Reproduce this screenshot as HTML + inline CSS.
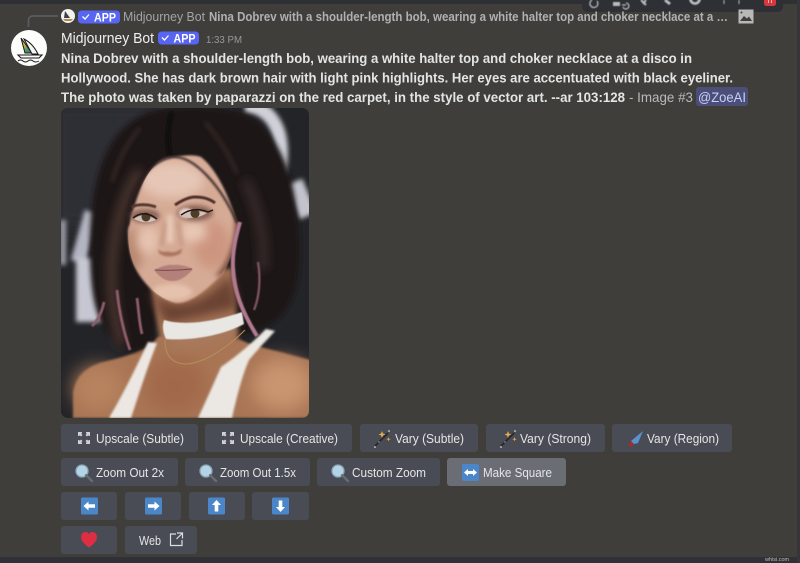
<!DOCTYPE html>
<html><head><meta charset="utf-8"><style>
html,body{margin:0;padding:0;width:800px;height:563px;overflow:hidden;background:#3f3e3a}
svg{display:block;font-family:"Liberation Sans",sans-serif}
.b{fill:#e4e5e6;font-size:12.5px}
.m{fill:#e3e4e4;font-weight:bold;font-size:14px}
.btn{fill:#494c54}
</style></head><body>
<svg width="800" height="563" viewBox="0 0 800 563" xmlns="http://www.w3.org/2000/svg">
<defs>
<filter id="s" filterUnits="userSpaceOnUse" x="0" y="0" width="800" height="563"><feGaussianBlur stdDeviation="0.3"/></filter>
<filter id="b05" filterUnits="userSpaceOnUse" x="0" y="0" width="800" height="563"><feGaussianBlur stdDeviation="0.6"/></filter>
<filter id="b1" filterUnits="userSpaceOnUse" x="0" y="0" width="800" height="563"><feGaussianBlur stdDeviation="1"/></filter>
<filter id="b2" filterUnits="userSpaceOnUse" x="0" y="0" width="800" height="563"><feGaussianBlur stdDeviation="2.500"/></filter>
<filter id="b4" filterUnits="userSpaceOnUse" x="0" y="0" width="800" height="563"><feGaussianBlur stdDeviation="5"/></filter>
<filter id="b8" filterUnits="userSpaceOnUse" x="0" y="0" width="800" height="563"><feGaussianBlur stdDeviation="9"/></filter>
<clipPath id="ic"><rect x="61" y="108" width="248" height="310" rx="7"/></clipPath>
<clipPath id="fc"><path d="M172 157c-18 1-32 22-44 73 0 20 4 34 12 46 8 12 22 24 36 27 12 1 28-10 44-27 8-9 14-28 17-53-6-20-18-52-36-66-8-3-19-1-29 0z"/></clipPath>
<linearGradient id="rb" x1="0" y1="0" x2="1" y2="1"><stop offset="0" stop-color="#e23d3d"/><stop offset=".35" stop-color="#e8b93a"/><stop offset=".65" stop-color="#3da35a"/><stop offset="1" stop-color="#6a48b8"/></linearGradient>
<g id="mag"><circle cx="7" cy="7" r="6" fill="#b5d3e6" stroke="#8ba6b6" stroke-width="1.300"/><path d="M11.200 11.200L17 17" stroke="#676d75" stroke-width="2.400" stroke-linecap="round"/></g>
<g id="wand"><path d="M1 16L14 3" stroke="#26282b" stroke-width="1.800"/><path d="M8 1l1 2.500 2.500 1-2.500 1-1 2.500-1-2.500-2.500-1 2.500-1zM14.500 7l.6 1.600 1.600.6-1.600.6-.6 1.600-.6-1.600-1.600-.6 1.600-.6z" fill="#e3a94a"/><circle cx="1" cy="17" r=".8" fill="#fff"/><circle cx="15" cy="1" r=".8" fill="#fff"/><circle cx="5" cy="12" r=".6" fill="#ddd"/></g>
<g id="ups" fill="#cfd0d3"><path d="M0 0h4v1.500H3L4.500 3 3 4.500 1.500 3v1H0zM8 0h4v4h-1.500V3L9 4.500 7.500 3 9 1.500H8zM0 8h1.500v1L3 7.500 4.500 9 3 10.500h1V12H0zM10.500 8H12v4H8v-1.500h1L7.500 9 9 7.500l1.500 1.500z"/></g>
</defs>

<rect width="800" height="563" fill="#3f3e3a"/>
<rect x="0" y="0" width="800" height="4" fill="#2f3034"/>
<rect x="0" y="557" width="800" height="6" fill="#303136"/>
<rect x="797" y="0" width="3" height="563" fill="#36363a"/>
<text x="765" y="561" font-size="5.500" fill="#bbb" filter="url(#s)">whisi.com</text>

<!-- toolbar -->
<rect x="582" y="-8" width="201" height="20" rx="5" fill="#2f3035"/>
<g fill="none" stroke="#b9babd" stroke-width="1.300" filter="url(#b05)">
<path d="M597 1a4 4 0 1 1-5-1"/>
<path d="M613 6h7v-4h-7z" fill="#b9babd" stroke="none"/>
<path d="M622 5h4M626 3a3 3 0 1 1-3 4"/>
<path d="M641 0l5 5M646 0l-3 4" stroke-width="2"/>
<path d="M665 0l5 4" stroke-width="3"/>
<circle cx="695" cy="-1" r="4.500" stroke-width="2.800"/>
<path d="M724 0v4M739 0v4" stroke-width="1"/>
</g>
<rect x="764" y="-4" width="12" height="10" rx="2.500" fill="#da373c"/>
<path d="M768.500 0v3M771.500 0v3" stroke="#e8b0b0" stroke-width="1"/>

<!-- reply line -->
<path d="M28.500 27V20a4 4 0 0 1 4-4H58" fill="none" stroke="#5b5c60" stroke-width="1.700"/>
<circle cx="68" cy="16" r="7" fill="#f2f2f0"/>
<path d="M65 11l5 7h-6z" fill="#3d4045"/><path d="M63 19h10l-2 2h-6z" fill="#b48b4e"/>
<rect x="78" y="10.500" width="42" height="13" rx="3.500" fill="#5865f2"/>
<path d="M82.500 16.500l2.500 2.500 4-4.500" fill="none" stroke="#fff" stroke-width="1.300"/>
<text x="94" y="21.500" font-size="11.500" font-weight="bold" fill="#fff" textLength="22" lengthAdjust="spacingAndGlyphs" filter="url(#s)">APP</text>
<text x="123" y="21" font-size="12.500" fill="#a3a4a6" textLength="82" lengthAdjust="spacingAndGlyphs" filter="url(#s)">Midjourney Bot</text>
<text x="209" y="21" font-size="12.500" font-weight="bold" fill="#b0b1b2" textLength="519" lengthAdjust="spacingAndGlyphs" filter="url(#s)">Nina Dobrev with a shoulder-length bob, wearing a white halter top and choker necklace at a …</text>
<path d="M738.500 9.500h15v14h-15z" fill="#b8b8b8"/><path d="M740 21l4-5 3 2.500 2-2 3 4.500z" fill="#3f3e3a"/><circle cx="741.500" cy="12.500" r="1" fill="#3f3e3a"/>

<!-- avatar -->
<circle cx="29" cy="48" r="18" fill="#fdfdfb"/>
<path d="M21 38l11 15H25z" fill="url(#rb)" stroke="#16181a" stroke-width="1"/>
<path d="M24 39c6 3 11 9 14 15h-6z" fill="#f5f5f2" stroke="#16181a" stroke-width="1"/>
<path d="M18 55h24l-3 3H21z" fill="#fdfdfb" stroke="#16181a" stroke-width="1.100"/>
<path d="M18 61q2.500-2 5 0t5 0 5 0 6 0" fill="none" stroke="#16181a" stroke-width="1"/>

<!-- header -->
<g filter="url(#s)">
<text x="61" y="43" font-size="14.500" fill="#efefef" textLength="93" lengthAdjust="spacingAndGlyphs">Midjourney Bot</text>
<rect x="158" y="31.500" width="41" height="13" rx="3.500" fill="#5865f2"/>
<path d="M162 37.500l2.500 2.500 4-4.500" fill="none" stroke="#fff" stroke-width="1.300"/>
<text x="173.500" y="42.500" font-size="11.500" font-weight="bold" fill="#fff" textLength="22" lengthAdjust="spacingAndGlyphs">APP</text>
<text x="206" y="43" font-size="10.500" fill="#96979a" textLength="36" lengthAdjust="spacingAndGlyphs">1:33 PM</text>
<text class="m" x="61" y="63" textLength="631" lengthAdjust="spacingAndGlyphs">Nina Dobrev with a shoulder-length bob, wearing a white halter top and choker necklace at a disco in</text>
<text class="m" x="61" y="82.500" textLength="672" lengthAdjust="spacingAndGlyphs">Hollywood. She has dark brown hair with light pink highlights. Her eyes are accentuated with black eyeliner.</text>
<text class="m" x="61" y="102" textLength="564" lengthAdjust="spacingAndGlyphs">The photo was taken by paparazzi on the red carpet, in the style of vector art. --ar 103:128</text>
<text x="629" y="102" font-size="14" fill="#b9babb" textLength="64" lengthAdjust="spacingAndGlyphs">- Image #3</text>
<rect x="696" y="87" width="52" height="19" rx="3" fill="#4b4f78"/>
<text x="698" y="102" font-size="14" fill="#c9cdfb" textLength="48" lengthAdjust="spacingAndGlyphs">@ZoeAI</text>
</g>

<!-- portrait -->
<g clip-path="url(#ic)">
<rect x="61" y="108" width="248" height="310" fill="#232428"/>
<rect x="50" y="100" width="130" height="130" fill="#2e2f35" filter="url(#b8)"/>
<g filter="url(#b2)" fill="none" stroke="#cfd0d8">
<path d="M245 106c22 0 36 18 36 46 0 10-1 16-3 22" stroke-width="14"/>
<path d="M294 182l14 34" stroke-width="18" stroke="#c2c3cc"/>
<path d="M92 212L78 262" stroke-width="15" stroke="#b4b5c2"/>
<path d="M90 258V322" stroke-width="28" stroke="#c6c7d2"/>
<path d="M63 220v45" stroke-width="6" stroke="#a0a1ad"/>
</g>
<!-- body -->
<path d="M73 418v-25c2-15 12-26 30-31 25-6 40-10 55-25l70-8c12 16 35 18 60 25 20 6 61 14 61 20v44z" fill="#a87555" filter="url(#b1)"/>
<ellipse cx="282" cy="385" rx="30" ry="26" fill="#c9946f" filter="url(#b8)"/>
<ellipse cx="98" cy="388" rx="24" ry="22" fill="#b8835f" filter="url(#b8)"/>
<ellipse cx="175" cy="385" rx="30" ry="28" fill="#a2694a" filter="url(#b8)"/>
<!-- hair mass -->
<path d="M176 108c-32 0-58 16-72 50-10 24-14 54-14 88 0 30 2 56 10 74 6 14 18 26 32 32l20-6 10-50 70-5 5 48 12-6c24-6 38-18 46-42 6-24 6-50 2-76-4-44-20-82-48-100-20-6-50-9-73-7z" fill="#1f1918" filter="url(#b2)"/>
<path d="M140 170c-14 20-24 50-28 90-2 30 2 60 10 85" fill="none" stroke="#4a342e" stroke-width="10" filter="url(#b4)"/>
<path d="M245 180c14 28 20 60 18 90" fill="none" stroke="#3a2c29" stroke-width="9" filter="url(#b4)"/>
<path d="M172 112c-4 14-5 30-2 44" fill="none" stroke="#0d0a0a" stroke-width="4" filter="url(#b1)"/>
<path d="M205 122c10 12 24 30 32 52M140 128c-12 14-22 32-28 54" fill="none" stroke="#3a2b28" stroke-width="3" filter="url(#b2)"/>
<!-- neck -->
<path d="M150 280l10 60-10 12 88-14-6-70z" fill="#a67356" filter="url(#b2)"/>
<path d="M148 288c14 22 52 24 82-14l8 34-72 16z" fill="#6a4333" filter="url(#b4)"/>
<path d="M170 345c20 6 50-2 68-14l-6-4-62 8z" fill="#a97a5d" filter="url(#b4)"/>
<!-- halter -->
<path d="M157 343l-9-1c-12 26-26 54-39 76h22c8-24 16-50 26-75z" fill="#ece7e2" filter="url(#b1)"/>
<path d="M275 331l-9-2c-15 15-30 28-45 38-8 18-16 36-23 51h34c5-22 10-42 17-58 8-10 18-20 26-29z" fill="#ebe7e2" filter="url(#b1)"/>
<!-- necklace -->
<path d="M165 340c0 12 4 24 22 24 20-2 42-18 58-34" fill="none" stroke="#b08d5c" stroke-width="1.100" filter="url(#s)"/>
<!-- choker -->
<path d="M164 320c20 6 50 2 78-8l2 12c-22 12-55 17-78 15-3-6-4-13-2-19z" fill="#e9e7e3" filter="url(#b05)"/>
<!-- face -->
<g filter="url(#b1)">
<path d="M172 157c-18 1-32 22-44 73 0 20 4 34 12 46 8 12 22 24 36 27 12 1 28-10 44-27 8-9 14-28 17-53-6-20-18-52-36-66-8-3-19-1-29 0z" fill="#d6ab96"/>
</g>
<g clip-path="url(#fc)">
<ellipse cx="172" cy="180" rx="32" ry="18" fill="#e6c6b6" filter="url(#b4)"/>
<ellipse cx="172" cy="292" rx="20" ry="8" fill="#e6c2ad" filter="url(#b2)"/>
<ellipse cx="212" cy="245" rx="18" ry="24" fill="#cd957f" filter="url(#b4)"/>
<ellipse cx="133" cy="250" rx="10" ry="22" fill="#b98770" filter="url(#b4)"/>
<path d="M232 195c6 30 2 60-18 82l24-6 8-60z" fill="#8a5a48" filter="url(#b2)"/>
<ellipse cx="148" cy="240" rx="11" ry="14" fill="#e6c3b0" filter="url(#b4)"/>
<ellipse cx="193" cy="232" rx="14" ry="10" fill="#e8c8b6" filter="url(#b4)"/>
</g>
<!-- nose -->
<path d="M166 222c-2 10-3 16-5 24M178 222c2 10 2 16 4 24" fill="none" stroke="#bd8f78" stroke-width="3" filter="url(#b2)"/>
<path d="M170 215v28" stroke="#ecd0c0" stroke-width="5" filter="url(#b2)"/>
<path d="M158 248c3 6 7 3 12 4s9-1 12-4l-1 5c-5 4-17 5-22 0z" fill="#a9725c" filter="url(#b1)"/>
<!-- brows -->
<path d="M131 207c7-3 17-3 25 0" fill="none" stroke="#54382e" stroke-width="3" filter="url(#b05)"/>
<path d="M175 205c6-4 14-8 20-8 8 0 15 2 20 6" fill="none" stroke="#50332a" stroke-width="3" filter="url(#b05)"/>
<!-- eyes -->
<ellipse cx="145" cy="216" rx="15" ry="7" fill="#8c6558" filter="url(#b2)"/>
<ellipse cx="195" cy="213" rx="18" ry="8" fill="#8c6355" filter="url(#b2)"/>
<ellipse cx="186" cy="213" rx="7" ry="5" fill="#e6cfc7" filter="url(#b1)"/>
<path d="M134 219q10-8 22 1q-10 5-22-1z" fill="#d0c1ba" filter="url(#s)"/>
<path d="M181 216q12-8 26-3q-12 8-26 3z" fill="#d0c1ba" filter="url(#s)"/>
<circle cx="146" cy="217" r="4.500" fill="#4e3c27" filter="url(#s)"/>
<circle cx="195" cy="213.500" r="4.500" fill="#4e3c27" filter="url(#s)"/>
<path d="M133 218q11-9 24 1M181 215q13-9 27-3l5-2" fill="none" stroke="#1f1512" stroke-width="1.400" filter="url(#s)"/>
<!-- lips -->
<path d="M154 270c7-3 13-6 19-5 6-1 14 1 20 4-7 8-13 12-21 12-8 0-13-5-18-11z" fill="#b3807a" filter="url(#b05)"/>
<path d="M155 270q18 1 37-1" fill="none" stroke="#7d4a47" stroke-width="1" filter="url(#s)"/>
<!-- hairline edge strands -->
<path d="M128 225c-2-25 14-62 44-68 22-2 50 30 65 66" fill="none" stroke="#2a1f1c" stroke-width="2" filter="url(#b1)"/>
<!-- pink highlights -->
<path d="M117 290c2 22 6 40 13 60M104 302c-2 10-6 18-12 24M137 298c2 14 2 24 5 36" fill="none" stroke="#8f5d6c" stroke-width="2.800" filter="url(#b05)"/>
<path d="M240 222c-4 14-8 30-7 46 1 22 8 42 24 68" fill="none" stroke="#b27a90" stroke-width="4" filter="url(#b05)"/>
<path d="M258 262c3 18 1 36-4 48" fill="none" stroke="#7e5560" stroke-width="2.300" filter="url(#b05)"/>
</g>

<!-- buttons -->
<g class="btn">
<rect x="61" y="424" width="137" height="28" rx="3"/><rect x="205" y="424" width="147" height="28" rx="3"/><rect x="360" y="424" width="118" height="28" rx="3"/><rect x="486" y="424" width="119" height="28" rx="3"/><rect x="612" y="424" width="120" height="28" rx="3"/>
<rect x="61" y="458" width="117" height="28" rx="3"/><rect x="185" y="458" width="125" height="28" rx="3"/><rect x="317" y="458" width="123" height="28" rx="3"/>
<rect x="447" y="458" width="119" height="28" rx="3" fill="#6b6d75"/>
<rect x="61" y="492" width="56" height="28" rx="3"/><rect x="125" y="492" width="56" height="28" rx="3"/><rect x="189" y="492" width="56" height="28" rx="3"/><rect x="252" y="492" width="57" height="28" rx="3"/>
<rect x="61" y="526" width="56" height="28" rx="3"/><rect x="125" y="526" width="72" height="28" rx="3"/>
</g>

<g filter="url(#s)">
<text class="b" x="96" y="443" textLength="88" lengthAdjust="spacingAndGlyphs">Upscale (Subtle)</text>
<text class="b" x="240" y="443" textLength="98" lengthAdjust="spacingAndGlyphs">Upscale (Creative)</text>
<text class="b" x="395" y="443" textLength="69" lengthAdjust="spacingAndGlyphs">Vary (Subtle)</text>
<text class="b" x="520" y="443" textLength="71" lengthAdjust="spacingAndGlyphs">Vary (Strong)</text>
<text class="b" x="647" y="443" textLength="72" lengthAdjust="spacingAndGlyphs">Vary (Region)</text>
<text class="b" x="96" y="477" textLength="68" lengthAdjust="spacingAndGlyphs">Zoom Out 2x</text>
<text class="b" x="220" y="477" textLength="76" lengthAdjust="spacingAndGlyphs">Zoom Out 1.5x</text>
<text class="b" x="352" y="477" textLength="74" lengthAdjust="spacingAndGlyphs">Custom Zoom</text>
<text class="b" x="483" y="477" textLength="69" lengthAdjust="spacingAndGlyphs">Make Square</text>
<text class="b" x="139" y="545" textLength="22" lengthAdjust="spacingAndGlyphs">Web</text>
</g>

<use href="#ups" x="78" y="432"/>
<use href="#ups" x="222" y="432"/>
<use href="#wand" x="374" y="430"/>
<use href="#wand" x="500" y="430"/>
<!-- brush -->
<path d="M628 445l3-4 3 3-4 3z" fill="#a8282e"/><path d="M631 441L643 431l-5 12-4 1z" fill="#5a93cb"/>
<use href="#mag" x="75" y="464"/>
<use href="#mag" x="199" y="464"/>
<use href="#mag" x="331" y="464"/>
<!-- make square -->
<rect x="462" y="464" width="17" height="17" rx="1.500" fill="#4a86c8"/>
<path d="M464 472.500l4-3.500v2h5v-2l4 3.500-4 3.500v-2h-5v2z" fill="#fff"/>
<!-- arrows -->
<rect x="81" y="497.500" width="17" height="17" rx="1.500" fill="#4a86c8"/><path d="M83.500 506l5-4.500v2.700h6.500v3.600h-6.500v2.700z" fill="#fff"/>
<rect x="145" y="497.500" width="17" height="17" rx="1.500" fill="#4a86c8"/><path d="M159.500 506l-5-4.500v2.700H148v3.600h6.500v2.700z" fill="#fff"/>
<rect x="208" y="497.500" width="17" height="17" rx="1.500" fill="#4a86c8"/><path d="M216.500 500l4.500 5h-2.700v6.500h-3.600V505H212z" fill="#fff"/>
<rect x="272" y="497.500" width="17" height="17" rx="1.500" fill="#4a86c8"/><path d="M280.500 512l4.500-5h-2.700v-6.500h-3.600v6.500H276z" fill="#fff"/>
<!-- heart -->
<path d="M89 547.500c-4-3-8-6-8-10.500 0-3 2.200-5 4.500-5 1.500 0 2.800.8 3.500 2 .7-1.200 2-2 3.500-2 2.300 0 4.500 2 4.500 5 0 4.500-4 7.500-8 10.500z" fill="#dd2e44"/>
<!-- external -->
<path d="M176 534h-5.500v11.500H182V540M177 533h5.500v5.500M182 533.500l-5.500 5.500" fill="none" stroke="#dcdde0" stroke-width="1.200"/>
</svg>
</body></html>
